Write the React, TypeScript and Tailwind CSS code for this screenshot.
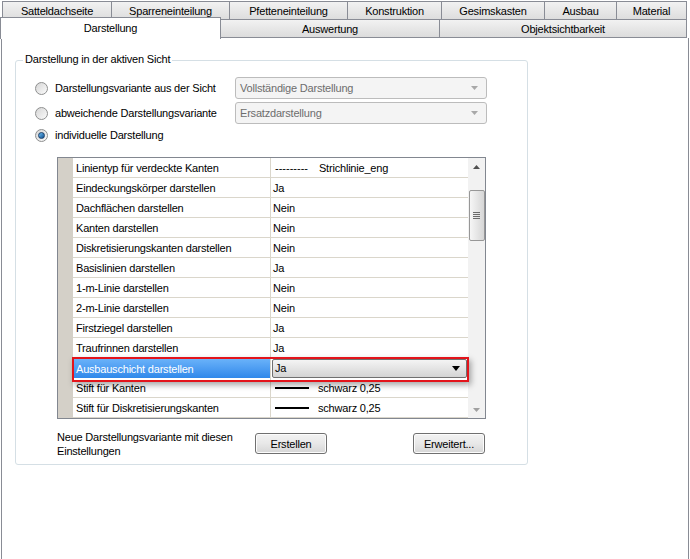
import React from 'react';

const topTabs = [
  { label: 'Satteldachseite', w: 'w-[110px]' },
  { label: 'Sparreneinteilung', w: 'w-[119px]' },
  { label: 'Pfetteneinteilung', w: 'w-[119px]' },
  { label: 'Konstruktion', w: 'w-[95px]' },
  { label: 'Gesimskasten', w: 'w-[104px]' },
  { label: 'Ausbau', w: 'w-[73px]' },
  { label: 'Material', w: 'w-[71px]' },
];

type Row = { name: string; value: string; kind?: 'dash' | 'pen' | 'selected' };

const rows: Row[] = [
  { name: 'Linientyp für verdeckte Kanten', value: 'Strichlinie_eng', kind: 'dash' },
  { name: 'Eindeckungskörper darstellen', value: 'Ja' },
  { name: 'Dachflächen darstellen', value: 'Nein' },
  { name: 'Kanten darstellen', value: 'Nein' },
  { name: 'Diskretisierungskanten darstellen', value: 'Nein' },
  { name: 'Basislinien darstellen', value: 'Ja' },
  { name: '1-m-Linie darstellen', value: 'Nein' },
  { name: '2-m-Linie darstellen', value: 'Nein' },
  { name: 'Firstziegel darstellen', value: 'Ja' },
  { name: 'Traufrinnen darstellen', value: 'Ja' },
  { name: 'Ausbauschicht darstellen', value: 'Ja', kind: 'selected' },
  { name: 'Stift für Kanten', value: 'schwarz 0,25', kind: 'pen' },
  { name: 'Stift für Diskretisierungskanten', value: 'schwarz 0,25', kind: 'pen' },
];

function Radio({ checked, label }: { checked?: boolean; label: string }) {
  return (
    <div className="flex items-center w-[200px]">
      <div className="w-[13px] h-[13px] rounded-full border border-[#8e8f8f] bg-gradient-to-br from-[#d6d6d6] to-[#fbfbfb] flex items-center justify-center">
        {checked && (
          <div className="w-[7px] h-[7px] rounded-full bg-gradient-to-br from-[#6fc0f5] to-[#0d4f8f] border border-[#1a3f6a]" />
        )}
      </div>
      <span className="ml-[7px]">{label}</span>
    </div>
  );
}

function DisabledCombo({ text }: { text: string }) {
  return (
    <div className="w-[252px] h-[22px] rounded-[3px] border border-[#bcbcbc] bg-[#f4f4f4] flex items-center pl-[4px] pr-[8px] text-[#6d6d6d]">
      <span className="flex-1">{text}</span>
      <svg width="7" height="4" viewBox="0 0 7 4">
        <path d="M0 0h7L3.5 4z" fill="#a8a8a8" />
      </svg>
    </div>
  );
}

function Button({ label, w }: { label: string; w: string }) {
  return (
    <div
      className={`${w} h-[21px] rounded-[3px] border border-[#707070] bg-gradient-to-b from-[#f3f3f3] via-[#e8e8e8] to-[#d6d6d6] flex items-center justify-center shadow-[inset_0_0_0_1px_#fcfcfc]`}
    >
      {label}
    </div>
  );
}

function Value({ row }: { row: Row }) {
  if (row.kind === 'dash') {
    return (
      <div className="flex items-center pl-[4px]">
        <span className="tracking-[0px]">---------</span>
        <span className="ml-[11px]">{row.value}</span>
      </div>
    );
  }
  if (row.kind === 'pen') {
    return (
      <div className="flex items-center pl-[4px]">
        <div className="w-[34px] h-[2px] bg-black" />
        <span className="ml-[9px]">{row.value}</span>
      </div>
    );
  }
  if (row.kind === 'selected') {
    return (
      <div className="h-[19px] w-[195px] rounded-[2px] border border-[#707070] bg-gradient-to-b from-[#f4f4f4] to-[#d4d4d4] flex items-center pl-[2px] pr-[6px]">
        <span className="flex-1">{row.value}</span>
        <svg width="8" height="5" viewBox="0 0 8 5">
          <path d="M0 0h8L4 5z" fill="#000" />
        </svg>
      </div>
    );
  }
  return <div className="pl-[2px]">{row.value}</div>;
}

function PropertyGrid() {
  return (
    <div className="ml-[22px] mt-[11px] w-[429px] h-[262px] border border-[#828790] flex bg-white">
      <div className="w-[15px] bg-[#d4d0c8]" />
      <div className="flex flex-col w-[395px]">
        {rows.map((row) => {
          const sel = row.kind === 'selected';
          return (
            <div key={row.name} className="relative flex h-[20px] shrink-0">
              <div
                className={`w-[198px] pl-[3px] pt-px flex items-center border-r border-[#dad6cb] ${
                  sel
                    ? 'bg-gradient-to-b from-[#6cb4fa] to-[#2f88ea] text-white'
                    : 'border-b'
                }`}
              >
                {row.name}
              </div>
              <div className={`w-[197px] flex items-center ${sel ? 'pl-px' : 'pt-px border-b border-[#dad6cb]'}`}>
                <Value row={row} />
              </div>
              {sel && (
                <div className="absolute left-[-1px] top-[-1px] w-[397px] h-[25px] border-2 border-[#e3141b] z-10 shadow-[2px_3px_6px_rgba(0,0,0,0.35)]" />
              )}
            </div>
          );
        })}
      </div>
      <div className="w-[17px] bg-[#f2f2f2] flex flex-col items-center">
        <div className="h-[17px] w-full flex items-center justify-center">
          <svg width="7" height="4" viewBox="0 0 7 4">
            <path d="M0 4h7L3.5 0z" fill="#505050" />
          </svg>
        </div>
        <div className="mt-[15px] w-[16px] h-[51px] rounded-[2px] border border-[#979797] bg-gradient-to-r from-[#f6f6f6] to-[#d6d6d6] flex flex-col items-center justify-center gap-[1px]">
          <div className="w-[7px] h-px bg-[#6a6a6a]" />
          <div className="w-[7px] h-px bg-[#6a6a6a]" />
          <div className="w-[7px] h-px bg-[#6a6a6a]" />
          <div className="w-[7px] h-px bg-[#6a6a6a]" />
        </div>
        <div className="flex-1" />
        <div className="h-[17px] w-full flex items-center justify-center">
          <svg width="7" height="4" viewBox="0 0 7 4">
            <path d="M0 0h7L3.5 4z" fill="#a0a0a0" />
          </svg>
        </div>
      </div>
    </div>
  );
}

export default function App() {
  return (
    <div className="w-[690px] h-[559px] bg-white flex flex-col overflow-hidden text-[11px] leading-[14px] tracking-[-0.2px] text-black font-['Liberation_Sans',Arial,sans-serif]">
      <div className="flex h-[19px] pl-[2px] pt-px">
        {topTabs.map((t) => (
          <div
            key={t.label}
            className={`${t.w} -ml-px first:ml-0 h-[19px] border border-b-0 border-[#898c95] bg-gradient-to-b from-[#f2f2f2] to-[#dcdcdc] flex items-center justify-center`}
          >
            {t.label}
          </div>
        ))}
      </div>
      <div className="flex h-[19px] items-start">
        <div className="relative z-10 w-[221px] h-[22px] -mt-[2px] border border-b-0 border-[#898c95] bg-white flex justify-center pt-[3px]">
          Darstellung
        </div>
        <div className="w-[220px] -ml-px h-[19px] border border-[#898c95] bg-gradient-to-b from-[#f2f2f2] to-[#dcdcdc] flex items-center justify-center pt-px">
          Auswertung
        </div>
        <div className="w-[248px] -ml-px h-[19px] border border-[#898c95] bg-gradient-to-b from-[#f2f2f2] to-[#dcdcdc] flex items-center justify-center pt-px">
          Objektsichtbarkeit
        </div>
      </div>
      <div className="ml-px w-[688px] flex-1 border-l border-r border-[#898c95] bg-white pt-[22px]">
        <div className="relative ml-[13px] w-[513px] h-[405px] border border-[#d5dfe5] rounded-[3px] pt-[16px] pl-[19px]">
          <span className="absolute left-[7px] top-[-9px] bg-white px-[2px]">
            Darstellung in der aktiven Sicht
          </span>
          <div className="flex items-center h-[22px]">
            <Radio label="Darstellungsvariante aus der Sicht" />
            <DisabledCombo text="Vollständige Darstellung" />
          </div>
          <div className="flex items-center h-[22px] mt-[3px]">
            <Radio label="abweichende Darstellungsvariante" />
            <DisabledCombo text="Ersatzdarstellung" />
          </div>
          <div className="flex items-center h-[22px]">
            <Radio checked label="individuelle Darstellung" />
          </div>
          <PropertyGrid />
          <div className="ml-[22px] mt-[14px] flex items-center h-[21px]">
            <div className="w-[198px]">
              Neue Darstellungsvariante mit diesen
              <br />
              Einstellungen
            </div>
            <Button label="Erstellen" w="w-[72px]" />
            <div className="w-[86px]" />
            <Button label="Erweitert..." w="w-[72px]" />
          </div>
        </div>
      </div>
    </div>
  );
}
